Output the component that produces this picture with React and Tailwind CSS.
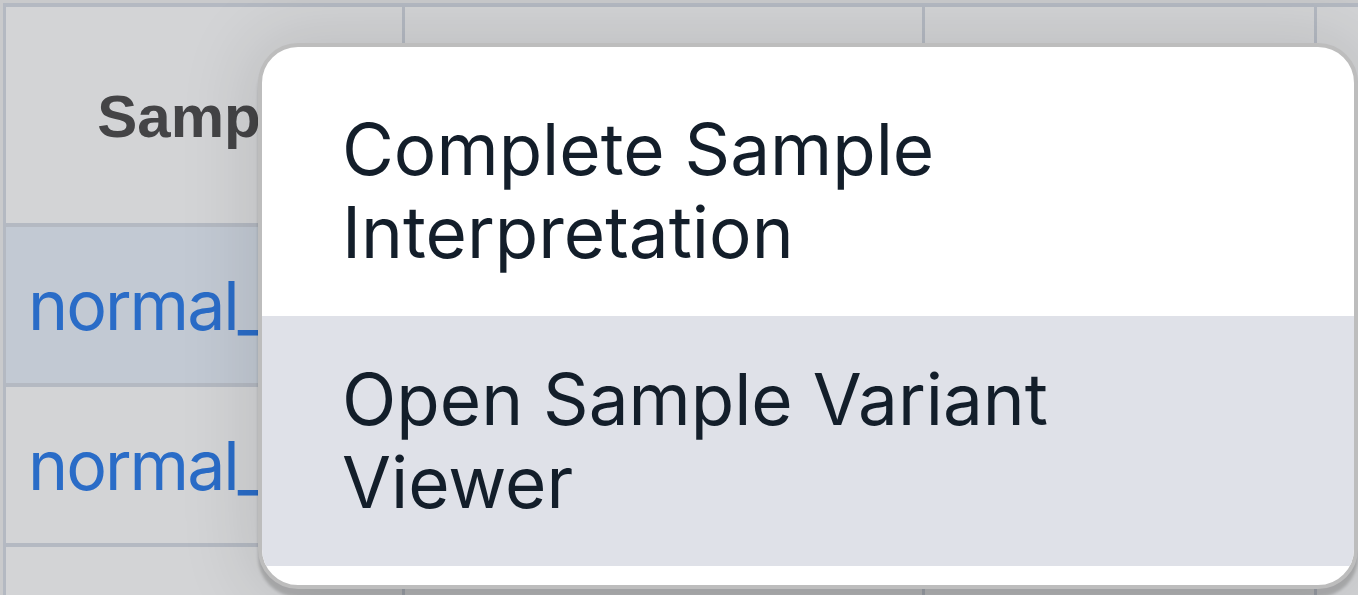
export default function App() {
  const line = "bg-[#b4b9c2]";
  return (
    <div className="relative w-[1358px] h-[595px] overflow-hidden bg-[#c9cacc] font-['Inter',sans-serif]">
      <div className="pl-[3px] pt-[3px]">
        <div className={`grid grid-cols-[396px_517px_389px_200px] grid-rows-[216px_156px_156px_156px] gap-x-[3px] gap-y-[4px] pl-[3px] pt-[4px] ${line}`}>
          <div className="flex items-center justify-center bg-[#d3d4d6] pt-[4px] font-['Liberation_Sans',Arial,sans-serif] text-[60px] font-bold text-[#444446]">
            Sample
          </div>
          <div className="bg-[#d3d4d6]" />
          <div className="bg-[#d3d4d6]" />
          <div className="bg-[#d3d4d6]" />

          <div className="flex items-center overflow-hidden whitespace-nowrap bg-[#c2c9d3] pl-[22px] text-[68px] tracking-[-2px] text-[#2a6cc7]">
            normal_sample_01
          </div>
          <div className="bg-[#c2c9d3]" />
          <div className="bg-[#c2c9d3]" />
          <div className="bg-[#c2c9d3]" />

          <div className="flex items-center overflow-hidden whitespace-nowrap bg-[#d3d4d6] pl-[22px] text-[68px] tracking-[-2px] text-[#2a6cc7]">
            normal_sample_02
          </div>
          <div className="bg-[#d3d4d6]" />
          <div className="bg-[#d3d4d6]" />
          <div className="bg-[#d3d4d6]" />

          <div className="bg-[#d3d4d6]" />
          <div className="flex items-center justify-center whitespace-nowrap bg-[#d3d4d6] pb-[4px] pl-[3px] text-[70px] tracking-[3px] text-[#444446]">
            (12,345,678)
          </div>
          <div className="bg-[#d3d4d6]" />
          <div className="bg-[#d3d4d6]" />
        </div>
      </div>

      <div className="absolute left-[258px] top-[43px] w-[1100px] overflow-hidden rounded-[40px] border-4 border-[#bdbdbd] bg-white py-[19px] text-[71px] leading-[83px] text-[#131e2a] shadow-[0_8px_3px_rgba(0,0,0,0.18),0_0_70px_12px_rgba(0,0,0,0.10)]">
        <div className="px-[80px] py-[42px]">Complete Sample Interpretation</div>
        <div className="bg-[#dfe1e8] px-[80px] py-[42px]">Open Sample Variant Viewer</div>
      </div>
    </div>
  );
}
